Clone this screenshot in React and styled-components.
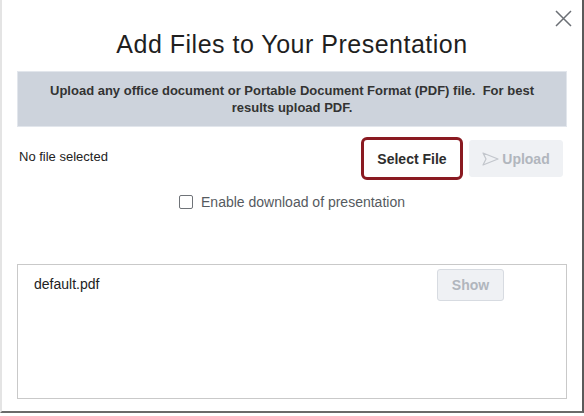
import React from "react";
import styled, { createGlobalStyle } from "styled-components";

const Global = createGlobalStyle`
  html, body { margin: 0; padding: 0; background: #ffffff; }
  body { font-family: "Liberation Sans", Arial, Helvetica, sans-serif; }
  * { box-sizing: border-box; }
`;

const Dialog = styled.div`
  position: relative;
  width: 584px;
  height: 413px;
  background: #ffffff;
  border-left: 2px solid #e4e4e4;
  border-right: 2px solid #5a5a5a;
  border-bottom: 2px solid #6a6a6a;
  padding: 0 15px 0 15px;
  display: flex;
  flex-direction: column;
`;

const Close = styled.button`
  position: absolute;
  top: 9px;
  right: 10px;
  width: 18px;
  height: 18px;
  padding: 0;
  border: none;
  background: transparent;
  display: flex;
  align-items: center;
  justify-content: center;
`;

const Title = styled.h1`
  margin: 30px 0 0 0;
  font-size: 25px;
  line-height: 28px;
  font-weight: 400;
  color: #1f1f1f;
  text-align: center;
  letter-spacing: 0.5px;
`;

const Banner = styled.div`
  margin-top: 13px;
  background: #cdd3dc;
  border: 1px solid #e2e6ec;
  padding: 10px 28px;
  font-size: 13px;
  line-height: 17px;
  font-weight: 700;
  color: #333333;
  text-align: center;
`;

const FileRow = styled.div`
  margin-top: 10px;
  display: flex;
  align-items: center;
  padding-right: 4px;
`;

const Status = styled.span`
  flex: 1;
  padding-left: 2px;
  padding-bottom: 4px;
  font-size: 13px;
  color: #222222;
`;

const Button = styled.button`
  font-family: "Liberation Sans", Arial, Helvetica, sans-serif;
  font-weight: 700;
  display: flex;
  align-items: center;
  justify-content: center;
  gap: 3px;
  padding: 0;
  cursor: pointer;
  width: ${(p) => p.$w}px;
  height: ${(p) => p.$h}px;
  font-size: ${(p) => p.$fs || 14}px;
  border-radius: ${(p) => (p.$focus ? 6 : 3)}px;
  color: ${(p) => (p.$disabled ? "#b1b6bd" : "#2d2d2d")};
  background: ${(p) => (p.$disabled ? "#eff1f4" : "#ffffff")};
  border: ${(p) =>
    p.$focus ? "3px solid #8a1a21" : p.$bordered ? "1px solid #d7dbe1" : "1px solid #eff1f4"};
  margin-left: ${(p) => p.$ml || 0}px;
  margin-right: ${(p) => p.$mr || 0}px;
`;

const CheckRow = styled.label`
  margin-top: 14px;
  display: flex;
  align-items: center;
  justify-content: center;
  gap: 8px;
  font-size: 14px;
  color: #555a60;
`;

const Check = styled.span`
  width: 14px;
  height: 14px;
  border: 1px solid #6f7378;
  border-radius: 2px;
  background: #ffffff;
`;

const FileList = styled.div`
  margin-top: 54px;
  height: 135px;
  border: 1px solid #c9c9c9;
  padding: 4px 0 0 16px;
`;

const FileItem = styled.div`
  display: flex;
  align-items: center;
  justify-content: space-between;
`;

const FileName = styled.span`
  font-size: 14px;
  color: #222222;
  padding-bottom: 2px;
`;

function SendIcon() {
  return (
    <svg width="17" height="14" viewBox="0 0 17 14" fill="none">
      <path
        d="M1 1 L16 7 L1 13 L4 7 Z"
        stroke="#c2c6cc"
        strokeWidth="1.2"
        strokeLinejoin="round"
      />
    </svg>
  );
}

function CloseIcon() {
  return (
    <svg width="17" height="17" viewBox="0 0 17 17">
      <path d="M1 1 L16 16 M16 1 L1 16" stroke="#6b6f75" strokeWidth="1.5" />
    </svg>
  );
}

export default function App() {
  return (
    <>
      <Global />
      <Dialog>
        <Close aria-label="Close">
          <CloseIcon />
        </Close>
        <Title>Add Files to Your Presentation</Title>
        <Banner>
          Upload any office document or Portable Document Format (PDF) file.&nbsp; For best
          results upload PDF.
        </Banner>
        <FileRow>
          <Status>No file selected</Status>
          <Button $w={102} $h={43} $focus>
            Select File
          </Button>
          <Button $w={94} $h={37} $ml={6} $disabled>
            <SendIcon />
            Upload
          </Button>
        </FileRow>
        <CheckRow>
          <Check />
          Enable download of presentation
        </CheckRow>
        <FileList>
          <FileItem>
            <FileName>default.pdf</FileName>
            <Button $w={67} $h={32} $mr={62} $disabled $bordered>
              Show
            </Button>
          </FileItem>
        </FileList>
      </Dialog>
    </>
  );
}
